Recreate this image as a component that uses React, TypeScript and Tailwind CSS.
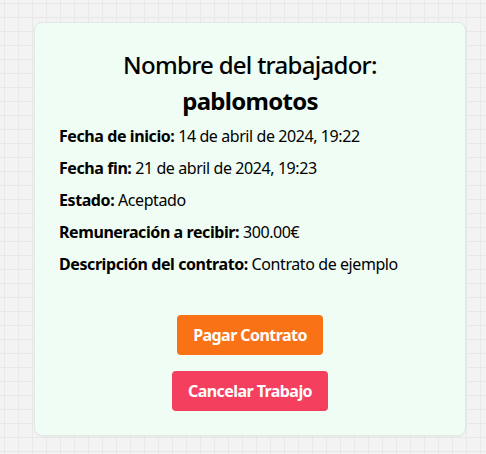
import React from "react";

const rows: [string, string][] = [
  ["Fecha de inicio:", "14 de abril de 2024, 19:22"],
  ["Fecha fin:", "21 de abril de 2024, 19:23"],
  ["Estado:", "Aceptado"],
  ["Remuneración a recibir:", "300.00€"],
  ["Descripción del contrato:", "Contrato de ejemplo"],
];

export default function App() {
  return (
    <div
      className="min-h-screen w-full bg-[#f3f3f3] bg-[linear-gradient(to_right,#e8e8e8_1px,transparent_1px),linear-gradient(to_bottom,#e8e8e8_1px,transparent_1px)] bg-[size:14px_14px] bg-[position:4px_3px] pt-[22px] pl-[34px] text-black"
      style={{ fontFamily: '"Noto Sans", "Open Sans", sans-serif' }}
    >
      <div className="w-[432px] rounded-lg border border-[#e2e8e4] bg-[#f0fdf4] px-6 pt-6 pb-6 shadow-[0_1px_2px_rgba(0,0,0,0.04)]">
        <h2 className="text-center text-[24px] leading-[36px] font-medium tracking-[-0.03em]">
          Nombre del trabajador:
          <br />
          <span className="font-bold">pablomotos</span>
        </h2>
        <div className="mt-[5px] flex flex-col gap-2">
          {rows.map(([k, v]) => (
            <p key={k} className="text-[16px] leading-6 tracking-[-0.026em]">
              <span className="font-bold">{k}</span> {v}
            </p>
          ))}
        </div>
        <div className="mt-[39px] flex flex-col items-center gap-4">
          <button className="rounded bg-[#f97316] px-4 py-2 text-[16px] leading-6 font-bold tracking-[-0.035em] text-white">
            Pagar Contrato
          </button>
          <button className="rounded bg-[#f43f5e] px-4 py-2 text-[16px] leading-6 font-bold tracking-[-0.035em] text-white">
            Cancelar Trabajo
          </button>
        </div>
      </div>
    </div>
  );
}
